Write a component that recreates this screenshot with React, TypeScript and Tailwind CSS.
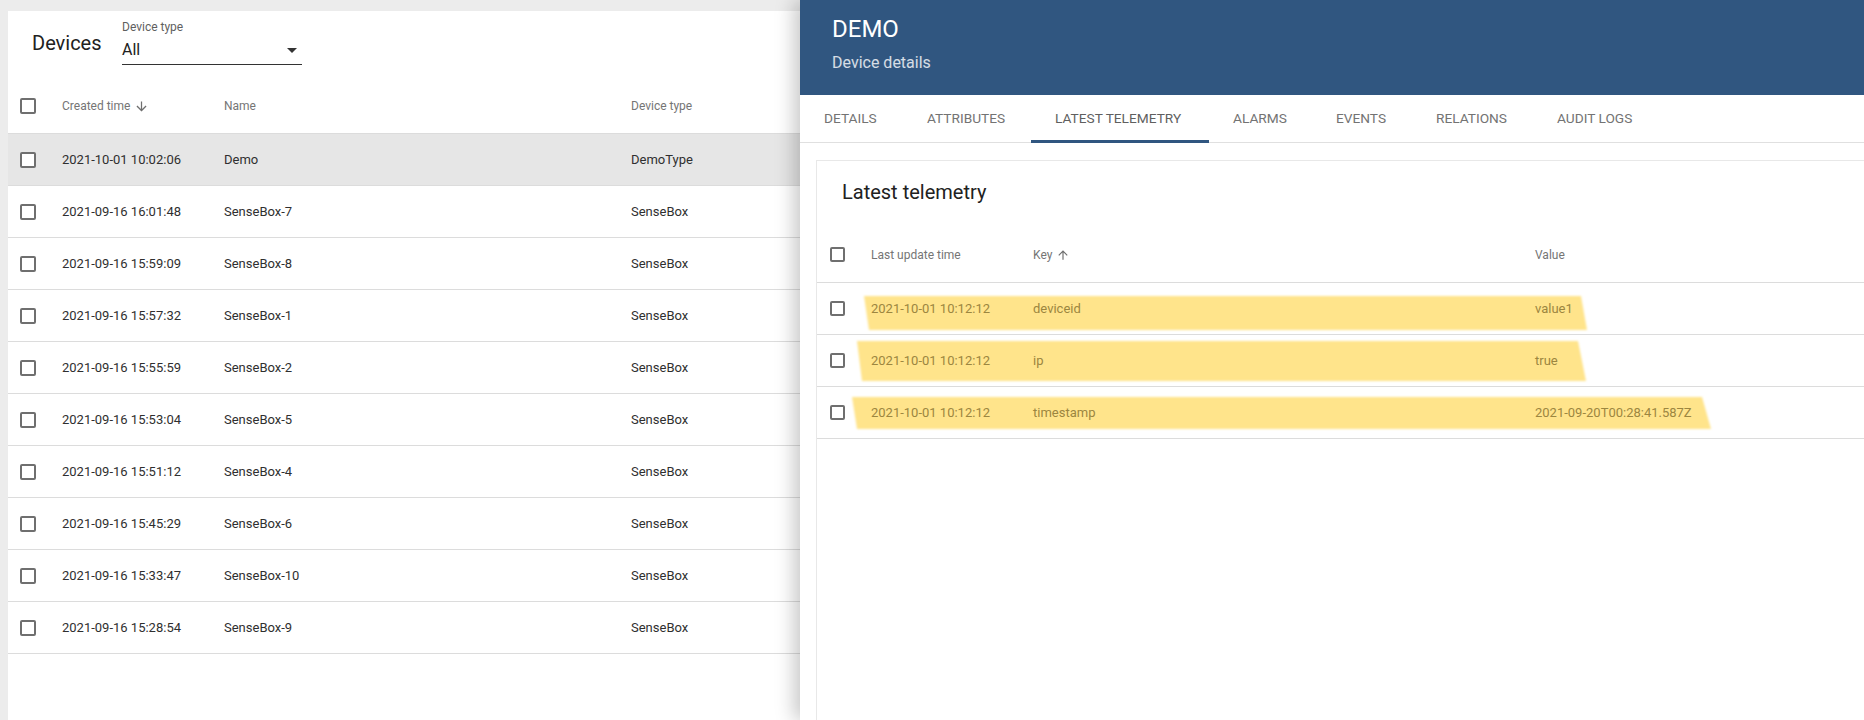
import React from 'react';

const devices = [
  { time: '2021-10-01 10:02:06', name: 'Demo', type: 'DemoType', selected: true },
  { time: '2021-09-16 16:01:48', name: 'SenseBox-7', type: 'SenseBox' },
  { time: '2021-09-16 15:59:09', name: 'SenseBox-8', type: 'SenseBox' },
  { time: '2021-09-16 15:57:32', name: 'SenseBox-1', type: 'SenseBox' },
  { time: '2021-09-16 15:55:59', name: 'SenseBox-2', type: 'SenseBox' },
  { time: '2021-09-16 15:53:04', name: 'SenseBox-5', type: 'SenseBox' },
  { time: '2021-09-16 15:51:12', name: 'SenseBox-4', type: 'SenseBox' },
  { time: '2021-09-16 15:45:29', name: 'SenseBox-6', type: 'SenseBox' },
  { time: '2021-09-16 15:33:47', name: 'SenseBox-10', type: 'SenseBox' },
  { time: '2021-09-16 15:28:54', name: 'SenseBox-9', type: 'SenseBox' },
];

// marker strokes drawn over the telemetry rows
const telemetry = [
  {
    key: 'deviceid',
    value: 'value1',
    box: 'left-[47px] top-[13px] w-[723px] h-[34px]',
    clip: '[clip-path:polygon(0_0,717px_0,100%_100%,5px_100%)]',
  },
  {
    key: 'ip',
    value: 'true',
    box: 'left-[40px] top-[6px] w-[729px] h-[40px]',
    clip: '[clip-path:polygon(0_0,721px_0,100%_100%,5px_100%)]',
  },
  {
    key: 'timestamp',
    value: '2021-09-20T00:28:41.587Z',
    box: 'left-[35px] top-[10px] w-[859px] h-[32px]',
    clip: '[clip-path:polygon(0_0,850px_0,100%_100%,5px_100%)]',
  },
];

const tabs = [
  { label: 'Details', w: 'w-[103px]' },
  { label: 'Attributes', w: 'w-[128px]' },
  { label: 'Latest telemetry', w: 'w-[178px]', active: true },
  { label: 'Alarms', w: 'w-[103px]' },
  { label: 'Events', w: 'w-[100px]' },
  { label: 'Relations', w: 'w-[121px]' },
  { label: 'Audit logs', w: 'w-[125px]' },
];

const Checkbox = ({ small }: { small?: boolean }) => (
  <div
    className={`${small ? 'w-[15px] h-[15px]' : 'w-4 h-4'} border-2 border-[#6f6f6f] rounded-[2px] bg-white`}
  />
);

const SortArrow = ({ up, size }: { up?: boolean; size: number }) => (
  <svg width={size} height={size} viewBox="0 0 24 24" className="fill-[#6f6f6f]">
    <path
      d={
        up
          ? 'M4 12l1.41 1.41L11 7.83V20h2V7.83l5.58 5.59L20 12l-8-8-8 8z'
          : 'M20 12l-1.41-1.41L13 16.17V4h-2v12.17l-5.58-5.59L4 12l8 8 8-8z'
      }
    />
  </svg>
);

export default function App() {
  return (
    <div className="relative w-[1864px] h-[720px] overflow-hidden bg-[#ececec] font-['Roboto',sans-serif]">
      {/* Devices list */}
      <div className="ml-2 mt-[11px] h-[709px] bg-white">
        <div className="flex items-start h-[67px] pl-6">
          <div className="w-[90px] mt-[20px] text-[20px] leading-6 text-[#212121]">Devices</div>
          <div className="w-[180px]">
            <div className="mt-[9px] h-[14px] text-[12px] leading-[14px] text-[#5f5f5f]">Device type</div>
            <div className="mt-[6px] flex items-center justify-between h-[20px] border-b border-[#333] box-content pb-[4px]">
              <span className="text-[16px] leading-5 text-[#212121]">All</span>
              <svg width="10" height="5" viewBox="0 0 10 5" className="mr-[5px] fill-[#333]">
                <path d="M0 0 L10 0 L5 5 Z" />
              </svg>
            </div>
          </div>
        </div>

        <div className="grid grid-cols-[42px_162px_407px_1fr] items-center h-[56px] pl-3 border-b border-[#dcdcdc] text-[12px] text-[#757575]">
          <Checkbox />
          <div className="flex items-center">
            Created time
            <span className="ml-[4px] mt-[1px]">
              <SortArrow size={15} />
            </span>
          </div>
          <div>Name</div>
          <div>Device type</div>
        </div>

        {devices.map((d) => (
          <div
            key={d.time}
            className={`grid grid-cols-[42px_162px_407px_1fr] items-center h-[52px] pl-3 border-b border-[#dcdcdc] text-[13px] text-[#2f2f2f] ${
              d.selected ? 'bg-[#e6e6e6]' : 'bg-white'
            }`}
          >
            <Checkbox />
            <div>{d.time}</div>
            <div>{d.name}</div>
            <div>{d.type}</div>
          </div>
        ))}
      </div>

      {/* Details drawer */}
      <div className="absolute top-0 right-0 w-[1064px] h-[720px] bg-white flex flex-col shadow-[-6px_0_18px_rgba(0,0,0,0.22)]">
        <div className="h-[95px] bg-[#305680] pl-[32px] pt-[15px]">
          <div className="h-[29px] text-[24px] leading-[29px] text-white">DEMO</div>
          <div className="mt-[9px] h-[20px] text-[16px] leading-5 text-white/80">Device details</div>
        </div>

        <div className="flex h-[48px] border-b border-[#e0e0e0]">
          {tabs.map((t) => (
            <div
              key={t.label}
              className={`relative flex items-center shrink-0 ${t.w} pl-6 text-[13.7px] uppercase ${
                t.active ? 'text-[#5f5f5f]' : 'text-[#737373]'
              }`}
            >
              {t.label}
              {t.active && <div className="absolute left-0 right-0 bottom-[-1px] h-[3px] bg-[#305680]" />}
            </div>
          ))}
        </div>

        <div className="flex-1 pl-[16px] pt-[17px]">
          <div className="h-full border-l border-t border-[#e8e8e8]">
            <div className="h-[66px] pl-[25px] pt-[19px] text-[20px] leading-6 text-[#212121]">Latest telemetry</div>

            <div className="grid grid-cols-[41px_162px_502px_1fr] items-center h-[56px] pl-[13px] border-b border-[#dcdcdc] text-[12px] text-[#757575]">
              <Checkbox small />
              <div>Last update time</div>
              <div className="flex items-center">
                Key
                <span className="ml-[4px]">
                  <SortArrow up size={14} />
                </span>
              </div>
              <div>Value</div>
            </div>

            {telemetry.map((r) => (
              <div
                key={r.key}
                className="relative grid grid-cols-[41px_162px_502px_1fr] items-center h-[52px] pl-[13px] border-b border-[#dcdcdc] text-[13px] text-[#9c8640]"
              >
                <div className={`absolute ${r.box} blur-[1.2px] pointer-events-none`}>
                  <div className={`w-full h-full bg-[#ffe48b] ${r.clip}`} />
                </div>
                <div className="relative">
                  <Checkbox small />
                </div>
                <div className="relative">2021-10-01 10:12:12</div>
                <div className="relative">{r.key}</div>
                <div className="relative">{r.value}</div>
              </div>
            ))}
          </div>
        </div>
      </div>
    </div>
  );
}
